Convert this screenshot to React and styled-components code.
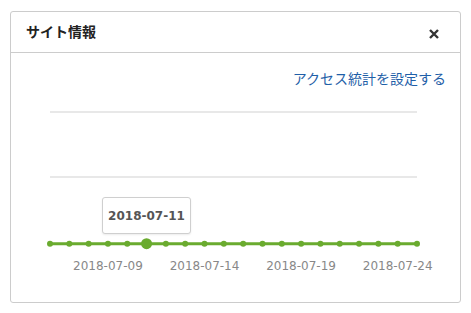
import React from "react";
import styled, { createGlobalStyle } from "styled-components";

const Global = createGlobalStyle`
  body {
    margin: 0;
    background: #fff;
    font-family: "DejaVu Sans", "Noto Sans CJK JP", sans-serif;
  }
`;

const Card = styled.section`
  box-sizing: border-box;
  margin: 11px 0 0 10px;
  width: 451px;
  height: 292px;
  border: 1px solid #cccccc;
  border-radius: 3px;
  background: #fff;
`;

const Header = styled.header`
  display: flex;
  align-items: center;
  justify-content: space-between;
  height: 40px;
  padding: 0 21px 0 15px;
  border-bottom: 1px solid #cccccc;
`;

const Title = styled.h2`
  margin: 0;
  font-family: "Noto Sans CJK JP", sans-serif;
  font-size: 14px;
  font-weight: 700;
  color: #222;
  position: relative;
  top: -1px;
`;

const Close = styled.button`
  display: flex;
  padding: 0;
  border: 0;
  background: none;
  margin-top: 4px;
  cursor: pointer;
`;

const Body = styled.div`
  padding-top: 15px;
`;

const LinkRow = styled.div`
  display: flex;
  justify-content: flex-end;
  padding-right: 14px;
  height: 20px;
  align-items: center;
`;

const SettingLink = styled.a`
  font-family: "Noto Sans CJK JP", sans-serif;
  font-size: 14px;
  color: #1f5fa8;
  text-decoration: none;
`;

const ChartWrap = styled.div`
  position: relative;
  height: 213px;
`;

const Tooltip = styled.div`
  position: absolute;
  box-sizing: border-box;
  width: 89px;
  height: 37px;
  display: flex;
  align-items: center;
  justify-content: center;
  background: #fff;
  border: 1px solid #cfcfcf;
  border-radius: 3px;
  box-shadow: 0 1px 2px rgba(0, 0, 0, 0.08);
  font-size: 12px;
  font-weight: 700;
  color: #555;
`;

const green = "#6aab2f";
const points = Array.from({ length: 20 }, (_, i) => 39 + i * (367 / 19));
const labels = [
  { i: 3, t: "2018-07-09" },
  { i: 8, t: "2018-07-14" },
  { i: 13, t: "2018-07-19" },
  { i: 18, t: "2018-07-24" },
];

function Chart() {
  const y = 155.7;
  return (
    <svg width="449" height="213" style={{ display: "block" }}>
      <line x1="39" x2="406" y1="24" y2="24" stroke="#e8e8e8" strokeWidth="2" />
      <line x1="39" x2="406" y1="89" y2="89" stroke="#e8e8e8" strokeWidth="2" />
      <line x1="39" x2="406" y1={y} y2={y} stroke={green} strokeWidth="3" />
      {points.map((x, i) => (
        <circle key={i} cx={x} cy={y} r={i === 5 ? 5.5 : 3} fill={green} />
      ))}
      {labels.map((l) => (
        <text
          key={l.t}
          x={points[l.i]}
          y="182"
          textAnchor="middle"
          fontFamily="DejaVu Sans, sans-serif"
          fontSize="12"
          fill="#888"
        >
          {l.t}
        </text>
      ))}
    </svg>
  );
}

export default function App() {
  return (
    <>
      <Global />
      <Card>
        <Header>
          <Title>サイト情報</Title>
          <Close aria-label="close">
            <svg width="10" height="10" viewBox="0 0 10 10">
              <path d="M1 1L9 9M9 1L1 9" stroke="#333" strokeWidth="2.4" />
            </svg>
          </Close>
        </Header>
        <Body>
          <LinkRow>
            <SettingLink href="#">アクセス統計を設定する</SettingLink>
          </LinkRow>
          <ChartWrap>
            <Chart />
            <Tooltip style={{ left: 91, top: 109 }}>2018-07-11</Tooltip>
          </ChartWrap>
        </Body>
      </Card>
    </>
  );
}
